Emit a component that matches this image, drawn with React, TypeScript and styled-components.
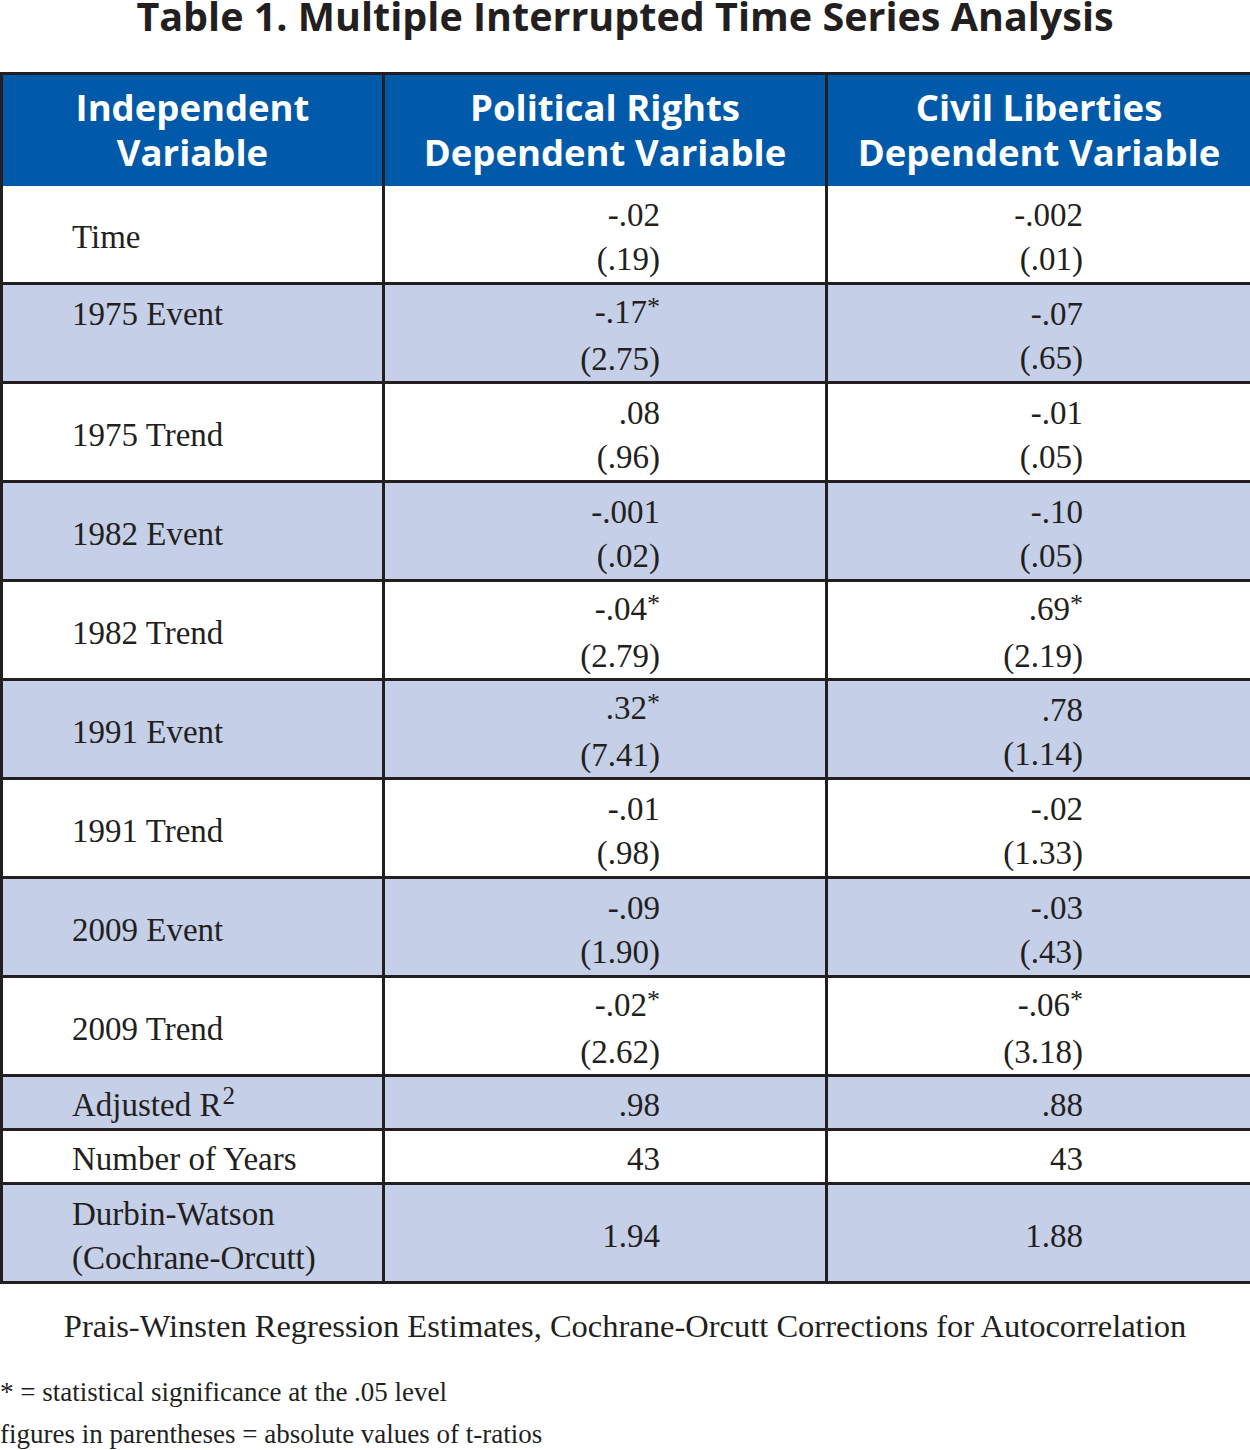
import React from "react";
import styled, { createGlobalStyle } from "styled-components";

const Global = createGlobalStyle`
  html, body { margin: 0; padding: 0; background: #ffffff; }
  body { font-family: "Liberation Serif", "Times New Roman", serif; color: #231f20; }
`;

const Page = styled.div`
  width: 1250px;
  display: flex;
  flex-direction: column;
`;

const Title = styled.h1`
  margin: -4px 0 0 0;
  height: 76px;
  font-family: "Open Sans", "DejaVu Sans", sans-serif;
  font-weight: 700;
  font-size: 39.5px;
  line-height: 40px;
  text-align: center;
  color: #231f20;
`;

const Table = styled.table`
  width: 1250px;
  table-layout: fixed;
  border-collapse: collapse;
  border: 3px solid #231f20;
`;

const HeadCell = styled.th`
  background: #005aa9;
  color: #ffffff;
  font-family: "Open Sans", "DejaVu Sans", sans-serif;
  font-weight: 700;
  font-size: 36.5px;
  line-height: 45px;
  height: 105px;
  padding: 2px 0 4px 0;
  text-align: center;
  vertical-align: middle;
  border-left: 3px solid #231f20;
  &:first-child { border-left: none; }
`;

const Row = styled.tr<{ $shade: boolean }>`
  background: ${(p) => (p.$shade ? "#c5cfe8" : "#ffffff")};
  border-top: 3px solid #231f20;
  &:first-child { border-top: none; }
`;

const LabelCell = styled.td<{ $h: number; $top?: boolean }>`
  height: ${(p) => (p.$top ? p.$h - 7 : p.$h - 5)}px;
  padding: ${(p) => (p.$top ? "7px 0 0 69px" : "5px 0 0 69px")};
  vertical-align: ${(p) => (p.$top ? "top" : "middle")};
  font-size: 33px;
  line-height: 44px;
  text-align: left;
`;

const ValueCell = styled.td<{ $pr: number }>`
  padding: 5px ${(p) => p.$pr}px 0 0;
  vertical-align: middle;
  text-align: right;
  font-size: 33px;
  line-height: 44px;
  border-left: 3px solid #231f20;
`;

const Sup = styled.sup`
  font-size: 25px;
  line-height: 0;
  vertical-align: 12px;
  margin-left: 1px;
`;

const Star = styled.span`
  font-size: 26px;
  position: relative;
  top: -8px;
`;

const Note = styled.p`
  margin: 0;
  text-align: center;
  font-size: 32.5px;
  line-height: 40px;
  padding-top: 22px;
`;

const Legend = styled.div`
  display: flex;
  flex-direction: column;
  padding-top: 25px;
  font-size: 27px;
  line-height: 42px;
`;

type Val = { v: string; star?: boolean; t?: string };
type RowData = { label: React.ReactNode; h: number; top?: boolean; pr?: Val; cl?: Val };

const rows: RowData[] = [
  { label: "Time", h: 96, pr: { v: "-.02", t: "(.19)" }, cl: { v: "-.002", t: "(.01)" } },
  { label: "1975 Event", h: 96, top: true, pr: { v: "-.17", star: true, t: "(2.75)" }, cl: { v: "-.07", t: "(.65)" } },
  { label: "1975 Trend", h: 96, pr: { v: ".08", t: "(.96)" }, cl: { v: "-.01", t: "(.05)" } },
  { label: "1982 Event", h: 96, pr: { v: "-.001", t: "(.02)" }, cl: { v: "-.10", t: "(.05)" } },
  { label: "1982 Trend", h: 96, pr: { v: "-.04", star: true, t: "(2.79)" }, cl: { v: ".69", star: true, t: "(2.19)" } },
  { label: "1991 Event", h: 96, pr: { v: ".32", star: true, t: "(7.41)" }, cl: { v: ".78", t: "(1.14)" } },
  { label: "1991 Trend", h: 96, pr: { v: "-.01", t: "(.98)" }, cl: { v: "-.02", t: "(1.33)" } },
  { label: "2009 Event", h: 96, pr: { v: "-.09", t: "(1.90)" }, cl: { v: "-.03", t: "(.43)" } },
  { label: "2009 Trend", h: 96, pr: { v: "-.02", star: true, t: "(2.62)" }, cl: { v: "-.06", star: true, t: "(3.18)" } },
  { label: <>Adjusted R<Sup>2</Sup></>, h: 51, pr: { v: ".98" }, cl: { v: ".88" } },
  { label: "Number of Years", h: 51, pr: { v: "43" }, cl: { v: "43" } },
  { label: <>Durbin-Watson<br />(Cochrane-Orcutt)</>, h: 96, pr: { v: "1.94" }, cl: { v: "1.88" } },
];

const renderVal = (val?: Val) =>
  val ? (
    <>
      {val.v}
      {val.star ? <Star>*</Star> : null}
      {val.t ? (
        <>
          <br />
          {val.t}
        </>
      ) : null}
    </>
  ) : null;

export default function App() {
  return (
    <Page>
      <Global />
      <Title>Table 1. Multiple Interrupted Time Series Analysis</Title>
      <Table>
        <colgroup>
          <col style={{ width: 382 }} />
          <col style={{ width: 443 }} />
          <col style={{ width: 425 }} />
        </colgroup>
        <thead>
          <tr>
            <HeadCell>Independent<br />Variable</HeadCell>
            <HeadCell>Political Rights<br />Dependent Variable</HeadCell>
            <HeadCell>Civil Liberties<br />Dependent Variable</HeadCell>
          </tr>
        </thead>
        <tbody>
          {rows.map((r, i) => (
            <Row key={i} $shade={i % 2 === 1}>
              <LabelCell $h={r.h} $top={r.top}>{r.label}</LabelCell>
              <ValueCell $pr={165}>{renderVal(r.pr)}</ValueCell>
              <ValueCell $pr={167}>{renderVal(r.cl)}</ValueCell>
            </Row>
          ))}
        </tbody>
      </Table>
      <Note>Prais-Winsten Regression Estimates, Cochrane-Orcutt Corrections for Autocorrelation</Note>
      <Legend>
        <span>* = statistical significance at the .05 level</span>
        <span>figures in parentheses = absolute values of t-ratios</span>
      </Legend>
    </Page>
  );
}
